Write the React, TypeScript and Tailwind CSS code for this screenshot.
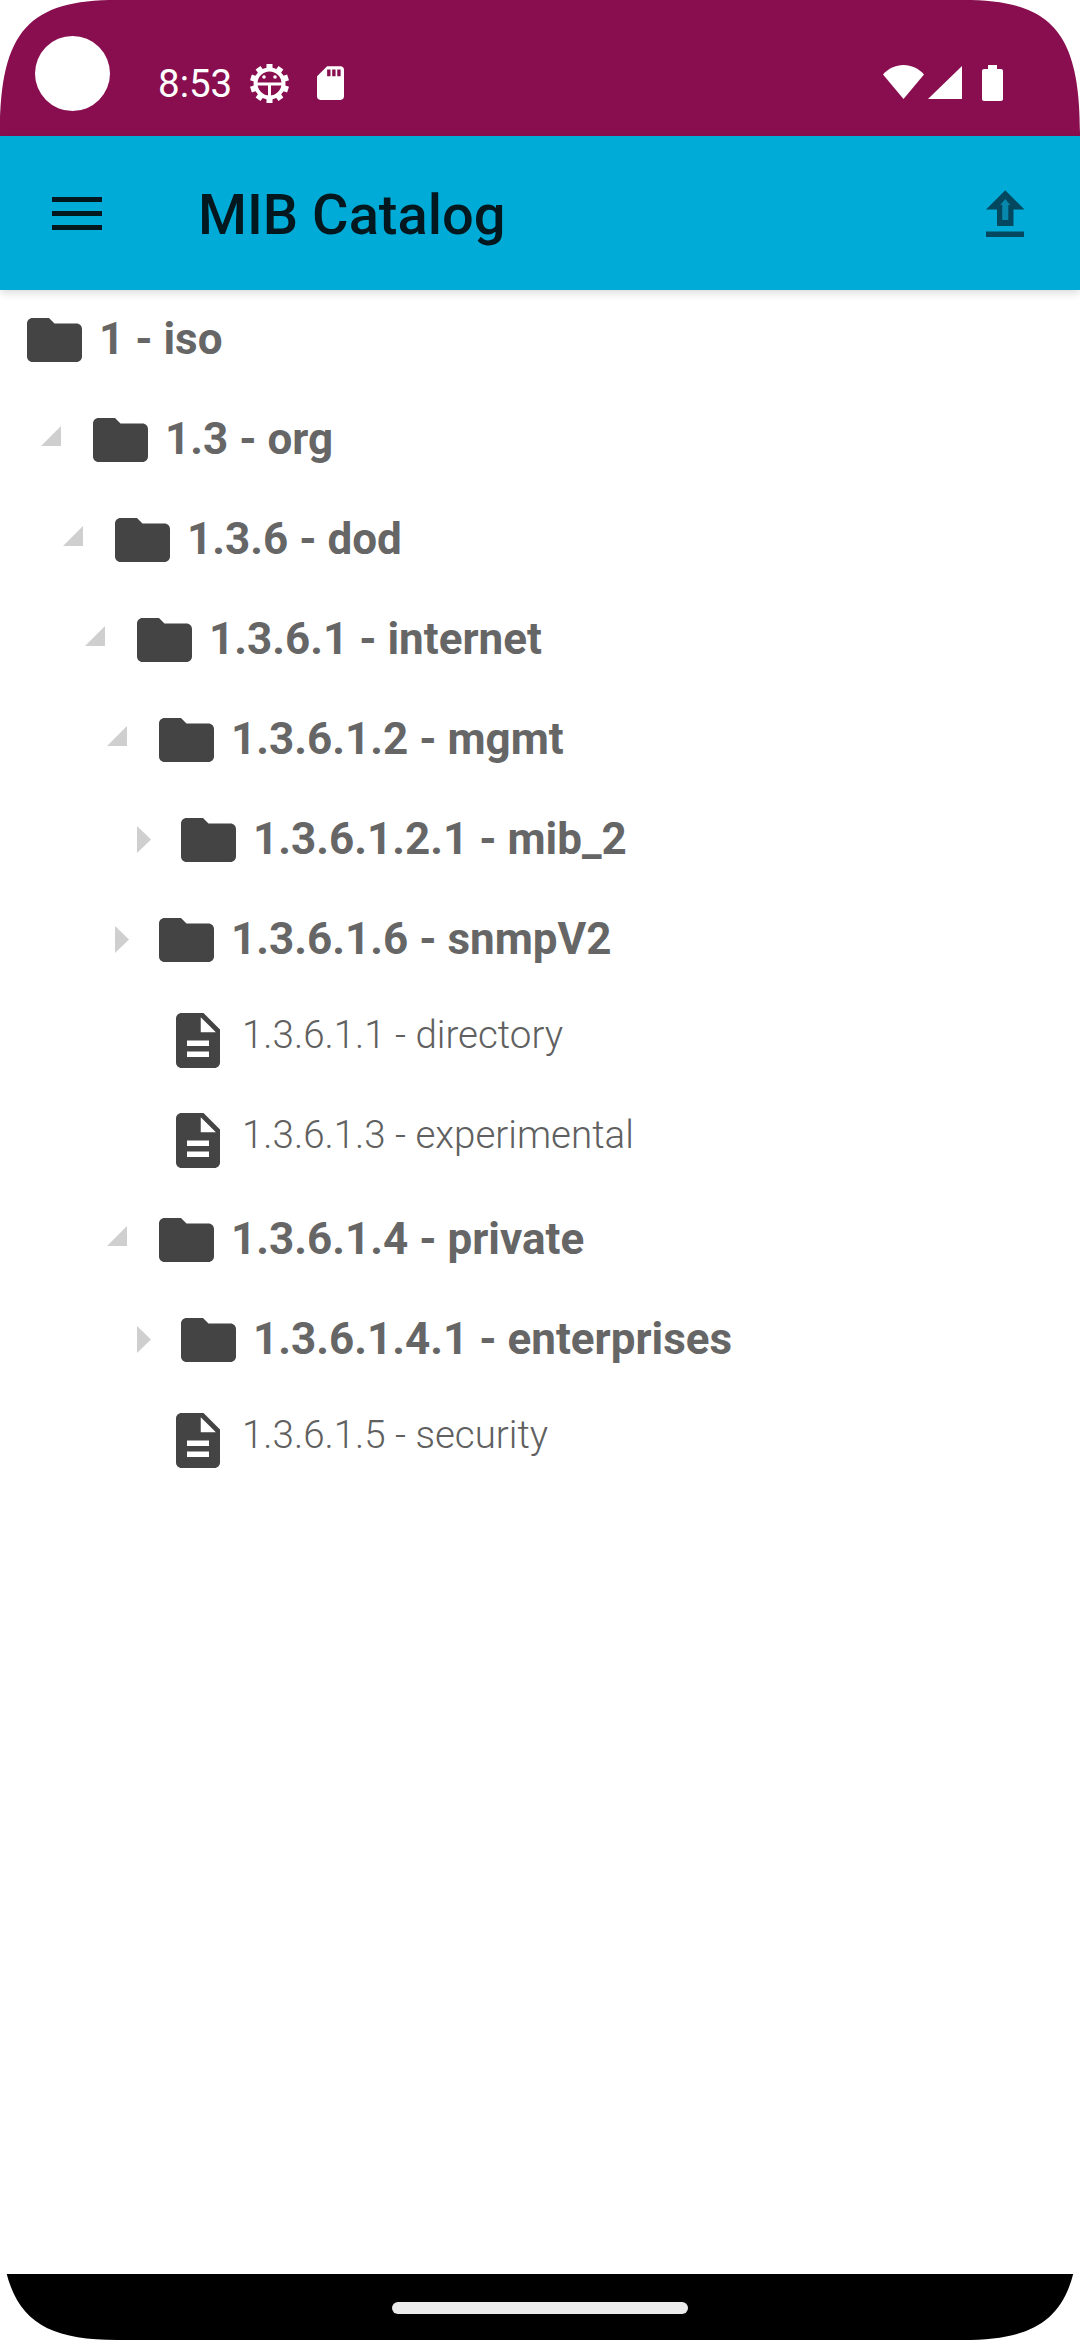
import React from 'react';

const ink = '#444444';

function Folder() {
  return (
    <svg width="55" height="44" viewBox="2 4 20 16" className="shrink-0 block">
      <path d="M10 4H4c-1.100 0-2 .9-2 2v12c0 1.100.9 2 2 2h16c1.100 0 2-.9 2-2V8c0-1.100-.9-2-2-2h-8l-2-2z" fill={ink} />
    </svg>
  );
}

function Doc() {
  return (
    <svg width="44" height="55" viewBox="4 2 16 20" className="shrink-0 block">
      <path d="M14 2H6c-1.100 0-2 .9-2 2v16c0 1.100.9 2 2 2h12c1.100 0 2-.9 2-2V8l-6-6zm2 16H8v-2h8v2zm0-4H8v-2h8v2zm-3-5V3.500L18.500 9H13z" fill={ink} />
    </svg>
  );
}

function Arrow({ open }: { open: boolean }) {
  return open ? (
    <svg width="20" height="20" viewBox="0 0 20 20" className="block">
      <path d="M20 0V20H0Z" fill="#cfcfcf" />
    </svg>
  ) : (
    <svg width="14" height="27" viewBox="0 0 14 27" className="block">
      <path d="M0 0L14 13.500L0 27Z" fill="#cfcfcf" />
    </svg>
  );
}

function FolderRow({ pad, open, label }: { pad: string; open?: boolean; label: string }) {
  return (
    <div className={`h-[100px] flex items-center ${pad}`}>
      <div className="w-[0px] relative">
        {open !== undefined && (
          <div className={open ? 'absolute right-[32px] top-[-14px]' : 'absolute right-[30px] top-[-14px]'}>
            <Arrow open={open} />
          </div>
        )}
      </div>
      <Folder />
      <span className="ml-[17px] mb-[2px] text-[44px] leading-none font-bold text-[#666666] whitespace-nowrap">{label}</span>
    </div>
  );
}

function LeafRow({ label }: { label: string }) {
  return (
    <div className="h-[100px] flex items-center pl-[176px]">
      <Doc />
      <span className="ml-[22px] mb-[10px] text-[38.5px] leading-none font-light text-[#606060] whitespace-nowrap">{label}</span>
    </div>
  );
}

function Corner({ className }: { className: string }) {
  return (
    <svg className={`absolute z-20 ${className}`} width="117" height="133" viewBox="0 0 117 133">
      <path d="M0 0H117C30 0 0 30 0 133Z" fill="white" />
    </svg>
  );
}

export default function App() {
  return (
    <div className="relative w-[1080px] h-[2340px] bg-white overflow-hidden flex flex-col font-['Roboto',sans-serif]">
      <Corner className="left-0 top-0" />
      <Corner className="right-0 top-0 -scale-x-100" />
      <Corner className="left-0 bottom-0 -scale-y-100" />
      <Corner className="right-0 bottom-0 -scale-100" />
      <div className="h-[136px] shrink-0 bg-[#880e4f] relative flex items-center text-white">
        <div className="absolute left-[35px] top-[36px] w-[75px] h-[75px] rounded-full bg-white" />
        <span className="absolute left-[158px] top-[60px] text-[38.5px] leading-[48px]">8:53</span>
        <svg className="absolute left-[250px] top-[64px]" width="39" height="39" viewBox="0 0 39 39">
          <g fill="white">
            {[0, 36, 72, 108, 144, 180, 216, 252, 288, 324].map((a) => (
              <rect key={a} x="16.500" y="0" width="6" height="7" transform={`rotate(${a} 19.500 19.500)`} />
            ))}
          </g>
          <circle cx="19.500" cy="19.500" r="14" fill="none" stroke="white" strokeWidth="4" />
          <path d="M6 20H33M19.500 20V33" stroke="white" strokeWidth="3" fill="none" />
          <circle cx="14" cy="13" r="1.800" fill="white" />
          <circle cx="25" cy="13" r="1.800" fill="white" />
        </svg>
        <svg className="absolute left-[317px] top-[66px]" width="27" height="34" viewBox="4 2 16 20">
          <path d="M18 2h-8L4.020 8 4 20c0 1.100.9 2 2 2h12c1.100 0 2-.9 2-2V4c0-1.100-.9-2-2-2zm-6 6h-2V4h2v4zm3 0h-2V4h2v4zm3 0h-2V4h2v4z" fill="white" />
        </svg>
        <svg className="absolute left-[883px] top-[65px]" width="41" height="34" viewBox="0 0 41 34">
          <path d="M0 9.500C5.500 3.500 12.500 0 20.500 0S35.500 3.500 41 9.500L20.500 34Z" fill="white" />
        </svg>
        <svg className="absolute left-[928px] top-[66px]" width="34" height="33" viewBox="0 0 34 33">
          <path d="M34 0V33H0Z" fill="white" />
        </svg>
        <svg className="absolute left-[982px] top-[65px]" width="21" height="36" viewBox="0 0 21 36">
          <path d="M6 0H15V4H19C20.100 4 21 4.900 21 6V34C21 35.100 20.100 36 19 36H2C.9 36 0 35.100 0 34V6C0 4.900 .9 4 2 4H6Z" fill="white" />
        </svg>
      </div>
      <div className="h-[154px] shrink-0 bg-[#00acd7] flex items-center justify-between shadow-[0_3px_8px_rgba(0,0,0,0.14)] relative z-10 pl-[52px] pr-[57px]">
        <div className="flex items-center">
          <div className="w-[50px] h-[33px] flex flex-col justify-between">
            <div className="h-[5px] bg-[#02171e]" />
            <div className="h-[5px] bg-[#02171e]" />
            <div className="h-[5px] bg-[#02171e]" />
          </div>
          <span className="ml-[96px] mt-[3px] text-[56px] leading-none font-medium text-[#02171e]">MIB Catalog</span>
        </div>
        <svg width="38.500" height="47" viewBox="5 3 14 17" className="mr-[-1px]">
          <path d="M9 16h6v-6h4l-7-7-7 7h4zm-4 2h14v2H5z" fill="#03485f" />
          <path d="M12 6.200L13.800 8.400H13.100V13.900H10.900V8.400H10.200Z" fill="#0988ae" />
        </svg>
      </div>
      <div className="flex-1 flex flex-col">
        <div className="h-[100px] flex items-center pl-[27px]">
          <Folder />
          <span className="ml-[17px] mb-[2px] text-[44px] leading-none font-bold text-[#666666]">1 - iso</span>
        </div>
        <FolderRow pad="pl-[93px]" open label="1.3 - org" />
        <FolderRow pad="pl-[115px]" open label="1.3.6 - dod" />
        <FolderRow pad="pl-[137px]" open label="1.3.6.1 - internet" />
        <FolderRow pad="pl-[159px]" open label="1.3.6.1.2 - mgmt" />
        <FolderRow pad="pl-[181px]" open={false} label="1.3.6.1.2.1 - mib_2" />
        <FolderRow pad="pl-[159px]" open={false} label="1.3.6.1.6 - snmpV2" />
        <LeafRow label="1.3.6.1.1 - directory" />
        <LeafRow label="1.3.6.1.3 - experimental" />
        <FolderRow pad="pl-[159px]" open label="1.3.6.1.4 - private" />
        <FolderRow pad="pl-[181px]" open={false} label="1.3.6.1.4.1 - enterprises" />
        <LeafRow label="1.3.6.1.5 - security" />
      </div>
      <div className="h-[66px] shrink-0 bg-black flex items-center justify-center pt-[1px]">
        <div className="w-[296px] h-[12px] rounded-full bg-[#ebebeb]" />
      </div>
    </div>
  );
}
